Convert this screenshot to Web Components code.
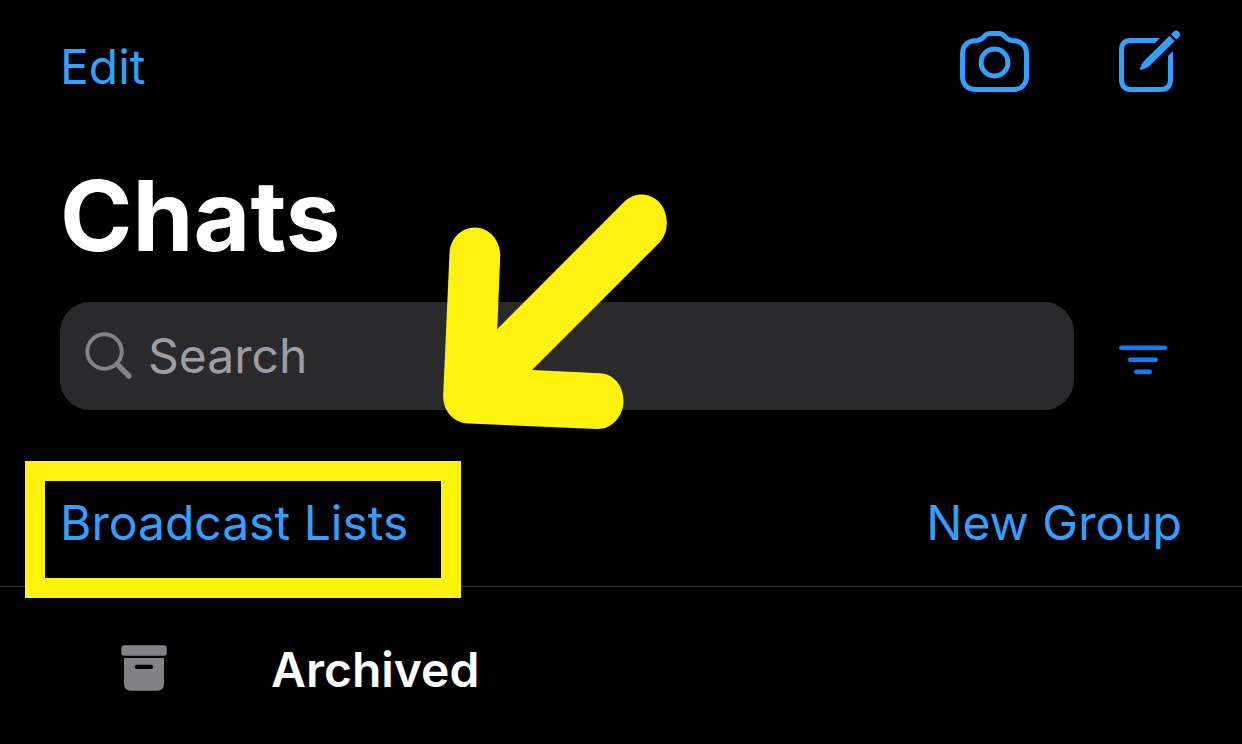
<!DOCTYPE html>
<html lang="en">
<head>
<meta charset="utf-8">
<meta name="viewport" content="width=device-width, initial-scale=1">
<title>Chats</title>
<style>
  html { background: #000; }
  body { margin: 0; background: #000; color: #fff; font-family: Inter, "Liberation Sans", sans-serif; font-size: 48px; line-height: 60px; }
</style>
</head>
<body>
<chats-screen></chats-screen>

<script>
const define = (name, html, setup) => {
  const template = document.createElement('template');
  template.innerHTML = html;
  customElements.define(name, class extends HTMLElement {
    constructor() {
      super();
      this.attachShadow({ mode: 'open' }).append(template.content.cloneNode(true));
    }
    connectedCallback() { if (setup) setup(this, this.shadowRoot); }
  });
};

define('text-action', `
  <style>
    :host { display: block; position: relative; }
    button { display: block; margin: 0; padding: 0; border: 0; background: none; color: #339fff; font: inherit; white-space: nowrap; cursor: pointer; }
  </style>
  <button type="button"><slot></slot></button>
  <slot name="marker"></slot>`);

define('icon-action', `
  <style>
    :host { display: block; color: #339fff; }
    button { display: block; margin: 0; padding: 0; border: 0; background: none; color: inherit; cursor: pointer; }
    ::slotted(svg) { display: block; }
  </style>
  <button type="button"><slot></slot></button>`,
  (host, root) => root.querySelector('button').setAttribute('aria-label', host.getAttribute('label')));

define('nav-bar', `
  <style>
    :host { display: flex; justify-content: space-between; align-items: flex-start; padding: 30px 60px 0; }
    .start { padding-top: 7px; }
    .end { display: flex; gap: 88px; }
  </style>
  <div class="start"><slot name="start"></slot></div>
  <div class="end"><slot></slot></div>`);

define('page-title', `
  <style>
    :host { display: block; padding: 59px 60px 0; }
    h1 { margin: 0; font-size: 98px; line-height: 120px; font-weight: 700; }
  </style>
  <h1><slot></slot></h1>`);

define('search-field', `
  <style>
    :host { display: block; flex: 1; min-width: 0; }
    label { display: flex; align-items: center; gap: 14px; height: 108px; padding: 0 24px; border-radius: 30px; background: #2a2a2c; box-sizing: border-box; }
    svg { flex: none; display: block; }
    input { flex: 1; min-width: 0; height: 60px; margin: 0; padding: 0; border: 0; outline: 0; background: none; color: #fff; font: inherit; }
    input::placeholder { color: #9e9da4; opacity: 1; }
  </style>
  <label>
    <svg width="50" height="50" viewBox="0 0 50 50" fill="none" stroke="#838287" aria-hidden="true">
      <circle cx="20.500" cy="20.500" r="17.200" stroke-width="4"/>
      <path d="M33 33 45 45" stroke-width="5.4" stroke-linecap="round"/>
    </svg>
    <input type="search" placeholder="Search" aria-label="Search">
  </label>`);

define('search-row', `
  <style>
    :host { display: flex; align-items: center; gap: 45px; padding: 26px 75px 0 60px; position: relative; }
    icon-action { color: #0a7fff; }
    .pointer { position: absolute; left: 440px; top: -84px; pointer-events: none; }
  </style>
  <search-field></search-field>
  <icon-action label="Filter">
    <svg width="48" height="40" viewBox="0 0 48 40" fill="none" stroke="currentColor" stroke-width="4.6" stroke-linecap="round" aria-hidden="true">
      <path d="M2.300 11.700H45.700M11.300 23.700H36.700M17.300 35.700H30.700"/>
    </svg>
  </icon-action>
  <svg class="pointer" width="230" height="240" viewBox="440 192 230 240" fill="#fff20d" aria-hidden="true">
    <path d="M449.500 253C450 239 461 227.500 475 227.500C489 227.500 500.500 240 500.200 256L497.300 329L624 202C634 192 649 192 659 202C669 213 669.500 231 660 242L532 370L600 373.200C614 374 623.500 386 623.500 401C623.500 416 612 429.500 597 429L469 423.500C454 423 443 412 443.200 395Z"/>
  </svg>`);

define('action-row', `
  <style>
    :host { display: flex; justify-content: space-between; padding: 83px 60px 33px; border-bottom: 1px solid #333335; }
  </style>
  <slot></slot>`);

define('focus-frame', `
  <style>
    :host { display: block; position: absolute; inset: -32px -53px -45px -35px; border: 20px solid #fff20d; pointer-events: none; z-index: 1; }
  </style>`);

define('list-row', `
  <style>
    :host { display: block; }
    a { display: flex; align-items: center; padding: 53px 60px 40px 120px; color: #fff; font-weight: 600; text-decoration: none; }
    .icon { flex: none; width: 151px; }
    ::slotted(svg) { display: block; }
  </style>
  <a href="#archived"><span class="icon"><slot name="icon"></slot></span><slot></slot></a>`);

define('chats-screen', `
  <style>:host { display: block; } svg { display: block; }</style>
  <header>
    <nav-bar>
      <text-action slot="start">Edit</text-action>
      <icon-action label="Camera">
        <svg width="70" height="66" viewBox="959 30 70 66" fill="none" stroke="currentColor" stroke-width="5" aria-hidden="true">
          <path d="M977 40.500C980.500 40.300 982 38.800 984 36.600C986 34.400 987.500 33.600 990 33.600H999C1001.500 33.600 1003 34.400 1005 36.600C1007 38.800 1008.500 40.300 1012 40.500C1021.500 40.700 1026.500 45.500 1026.500 54V76C1026.500 84.500 1021.500 89.500 1013 89.500H976C967.500 89.500 962.500 84.500 962.500 76V54C962.500 45.500 967.500 40.700 977 40.500Z"/>
          <circle cx="994.500" cy="62.500" r="13.400"/>
        </svg>
      </icon-action>
      <icon-action label="New chat">
        <svg width="65" height="66" viewBox="1117 30 65 66" fill="none" stroke="currentColor" stroke-width="5" aria-hidden="true">
          <path d="M1160 38 1155 43 1150 43 1150 38Z" fill="currentColor" stroke="none"/>
          <path d="M1151 40.500H1131C1124.500 40.500 1121.500 44 1121.500 50V79.500C1121.500 86 1125 89.500 1131 89.500H1161C1167 89.500 1170.500 86 1170.500 79.500V58"/>
          <path d="M1168 56 1173 51V60H1168Z" fill="currentColor" stroke="none"/>
          <path d="M1169.500 35.800 1174.700 41 1150 65.500C1148 67.500 1143 69.500 1141 70C1140.300 70.200 1139.800 69.600 1140 69C1140.600 66.500 1142.500 62.500 1144.500 60.500Z" fill="currentColor" stroke="none"/>
          <path d="M1171 34.300 1173.500 31.700C1175 30.200 1177.300 30.200 1178.800 31.700C1180.500 33.300 1180.500 35.600 1179 37.100L1176.300 39.600Z" fill="currentColor" stroke="none"/>
        </svg>
      </icon-action>
    </nav-bar>
    <page-title>Chats</page-title>
  </header>
  <main>
    <search-row></search-row>
    <action-row>
      <text-action>Broadcast Lists<focus-frame slot="marker"></focus-frame></text-action>
      <text-action>New Group</text-action>
    </action-row>
    <list-row>
      <svg slot="icon" width="48" height="52" viewBox="120 644 48 52" fill="#828188" aria-hidden="true">
        <rect x="121.300" y="645.200" width="45.500" height="10.600" rx="3"/>
        <path fill-rule="evenodd" d="M124 658H164V683.500Q164 690.700 157 690.700H131Q124 690.700 124 683.500ZM137 664.800a2 2 0 0 0 0 4.200h14a2 2 0 0 0 0-4.200Z"/>
      </svg>
      Archived
    </list-row>
  </main>`);
</script>
</body>
</html>
